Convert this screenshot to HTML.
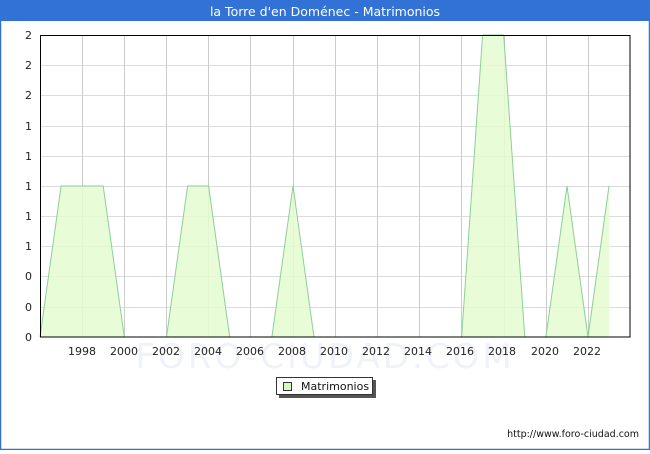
<!DOCTYPE html>
<html><head><meta charset="utf-8"><style>
body{margin:0;width:650px;height:450px;overflow:hidden;background:#fff;font-family:"DejaVu Sans","Liberation Sans",sans-serif}
</style></head><body>
<svg width="650" height="450" xmlns="http://www.w3.org/2000/svg" font-family="DejaVu Sans, Liberation Sans, sans-serif">
<rect x="0" y="0" width="650" height="450" fill="#fff"/>
<rect x="0.5" y="0.5" width="649" height="449" fill="none" stroke="#3272d6" stroke-width="1.5"/>
<rect x="0" y="0" width="650" height="21" fill="#3272d6"/>
<text x="325" y="16" fill="#fff" font-size="12.5" text-anchor="middle">la Torre d'en Doménec - Matrimonios</text>
<g stroke="#dcdcdc" stroke-width="1">
<line x1="40" x2="630" y1="65.5" y2="65.5"/><line x1="40" x2="630" y1="95.5" y2="95.5"/><line x1="40" x2="630" y1="126.5" y2="126.5"/><line x1="40" x2="630" y1="156.5" y2="156.5"/><line x1="40" x2="630" y1="186.5" y2="186.5"/><line x1="40" x2="630" y1="216.5" y2="216.5"/><line x1="40" x2="630" y1="246.5" y2="246.5"/><line x1="40" x2="630" y1="276.5" y2="276.5"/><line x1="40" x2="630" y1="307.5" y2="307.5"/>
</g>
<g stroke="#cccccc" stroke-width="1">
<line y1="35" y2="337" x1="82.5" x2="82.5"/><line y1="35" y2="337" x1="124.5" x2="124.5"/><line y1="35" y2="337" x1="166.5" x2="166.5"/><line y1="35" y2="337" x1="208.5" x2="208.5"/><line y1="35" y2="337" x1="250.5" x2="250.5"/><line y1="35" y2="337" x1="293.5" x2="293.5"/><line y1="35" y2="337" x1="335.5" x2="335.5"/><line y1="35" y2="337" x1="377.5" x2="377.5"/><line y1="35" y2="337" x1="419.5" x2="419.5"/><line y1="35" y2="337" x1="461.5" x2="461.5"/><line y1="35" y2="337" x1="504.5" x2="504.5"/><line y1="35" y2="337" x1="546.5" x2="546.5"/><line y1="35" y2="337" x1="588.5" x2="588.5"/>
</g>
<text x="325" y="368" fill="#f0f2fa" font-size="34" text-anchor="middle" letter-spacing="3">FORO-CIUDAD.COM</text>
<polygon points="40,337 61.1,186 82.2,186 103.2,186 124.3,337 166.5,337 187.6,186 208.6,186 229.7,337 271.9,337 293,186 314,337 461.6,337 482.6,35 503.7,35 524.8,337 545.9,337 567,186 588,337 609,186 609,337" fill="#e4fcd0" fill-opacity="0.85" stroke="none"/>
<polyline points="40,337 61.1,186 82.2,186 103.2,186 124.3,337 166.5,337 187.6,186 208.6,186 229.7,337 271.9,337 293,186 314,337 461.6,337 482.6,35 503.7,35 524.8,337 545.9,337 567,186 588,337 609,186" fill="none" stroke="#8ccf9a" stroke-width="1"/>
<rect x="40.5" y="35.5" width="589.5" height="301.5" fill="none" stroke="#000" stroke-width="1"/>
<g font-size="11" fill="#222" text-anchor="end">
<text x="32" y="39">2</text><text x="32" y="69">2</text><text x="32" y="99">2</text><text x="32" y="130">1</text><text x="32" y="160">1</text><text x="32" y="190">1</text><text x="32" y="220">1</text><text x="32" y="250">1</text><text x="32" y="280">0</text><text x="32" y="311">0</text><text x="32" y="341">0</text>
</g>
<g font-size="11" fill="#222" text-anchor="middle">
<text x="82" y="355">1998</text><text x="124" y="355">2000</text><text x="166" y="355">2002</text><text x="208" y="355">2004</text><text x="250" y="355">2006</text><text x="292" y="355">2008</text><text x="334" y="355">2010</text><text x="376" y="355">2012</text><text x="418" y="355">2014</text><text x="460" y="355">2016</text><text x="502" y="355">2018</text><text x="545" y="355">2020</text><text x="587" y="355">2022</text>
</g>
<rect x="279" y="380" width="97" height="18" fill="#555"/>
<rect x="276.5" y="377.5" width="96" height="17" fill="#fff" stroke="#333" stroke-width="1"/>
<rect x="283.5" y="382.5" width="8" height="8" fill="#d7fab8" stroke="#333" stroke-width="1"/>
<text x="301" y="390" font-size="11" fill="#111">Matrimonios</text>
<text x="639" y="437" font-size="9.5" fill="#111" text-anchor="end">http://www.foro-ciudad.com</text>
</svg>
</body></html>
